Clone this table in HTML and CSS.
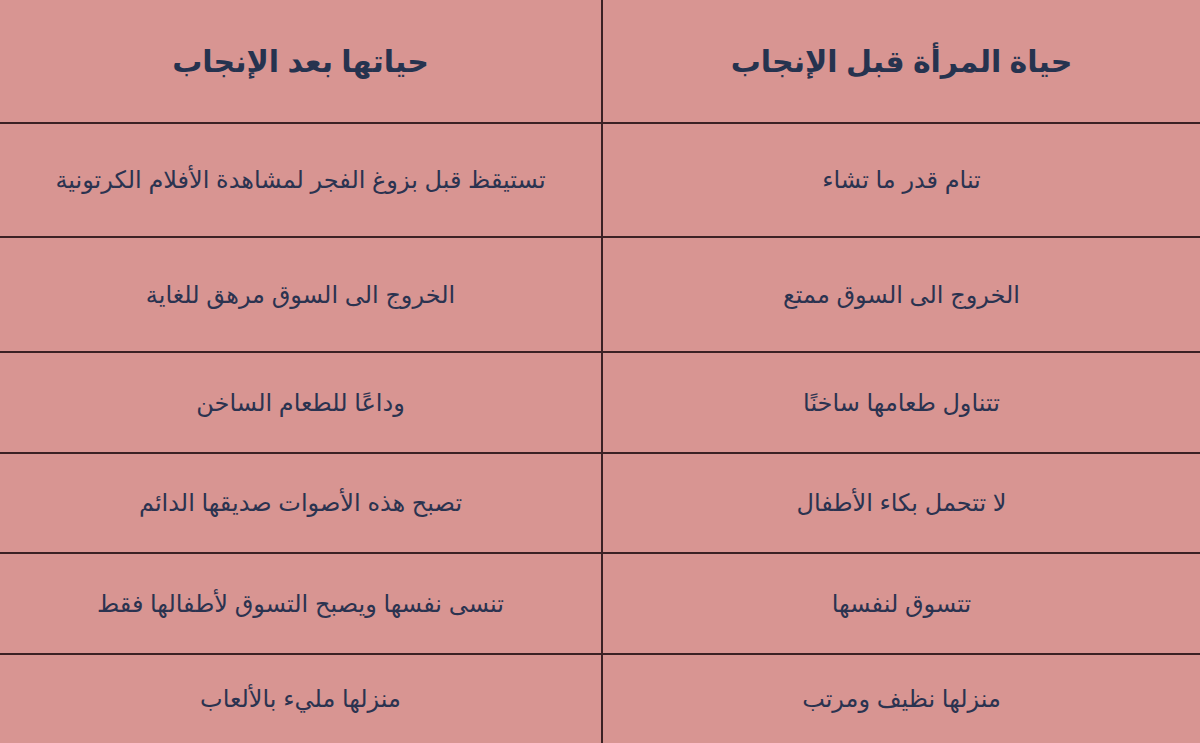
FILE: index.html
```html
<!DOCTYPE html>
<html lang="ar" dir="rtl">
<head>
<meta charset="utf-8">
<link rel="stylesheet" href="styles.css">
</head>
<body>
<div class="table">
  <div class="cell head r0">حياة المرأة قبل الإنجاب</div>
  <div class="cell head r0 left">حياتها بعد الإنجاب</div>
  <div class="cell r1">تنام قدر ما تشاء</div>
  <div class="cell r1 left">تستيقظ قبل بزوغ الفجر لمشاهدة الأفلام الكرتونية</div>
  <div class="cell r2">الخروج الى السوق ممتع</div>
  <div class="cell r2 left">الخروج الى السوق مرهق للغاية</div>
  <div class="cell r3">تتناول طعامها ساخنًا</div>
  <div class="cell r3 left">وداعًا للطعام الساخن</div>
  <div class="cell r4">لا تتحمل بكاء الأطفال</div>
  <div class="cell r4 left">تصبح هذه الأصوات صديقها الدائم</div>
  <div class="cell r5">تتسوق لنفسها</div>
  <div class="cell r5 left">تنسى نفسها ويصبح التسوق لأطفالها فقط</div>
  <div class="cell r6 last">منزلها نظيف ومرتب</div>
  <div class="cell r6 left last">منزلها مليء بالألعاب</div>
</div>
</body>
</html>
```
FILE: styles.css
```css
html, body {
  margin: 0;
  padding: 0;
  background: #d89592;
}
body {
  width: 1200px;
  height: 743px;
  overflow: hidden;
  font-family: "Liberation Sans", "DejaVu Sans", sans-serif;
  color: #2b3350;
}
.table {
  direction: rtl;
  display: grid;
  grid-template-columns: 597px 603px;
  grid-template-rows: 124px 114px 115px 101px 100px 101px 88px;
}
.cell {
  display: flex;
  align-items: center;
  justify-content: center;
  font-size: 24px;
  border-bottom: 2px solid #3b2124;
  box-sizing: border-box;
}
.cell.left {
  border-right: 2px solid #3b2124;
}
.cell.last {
  border-bottom: none;
}
.head {
  font-size: 30px;
  font-weight: bold;
  color: #26334f;
}
```
